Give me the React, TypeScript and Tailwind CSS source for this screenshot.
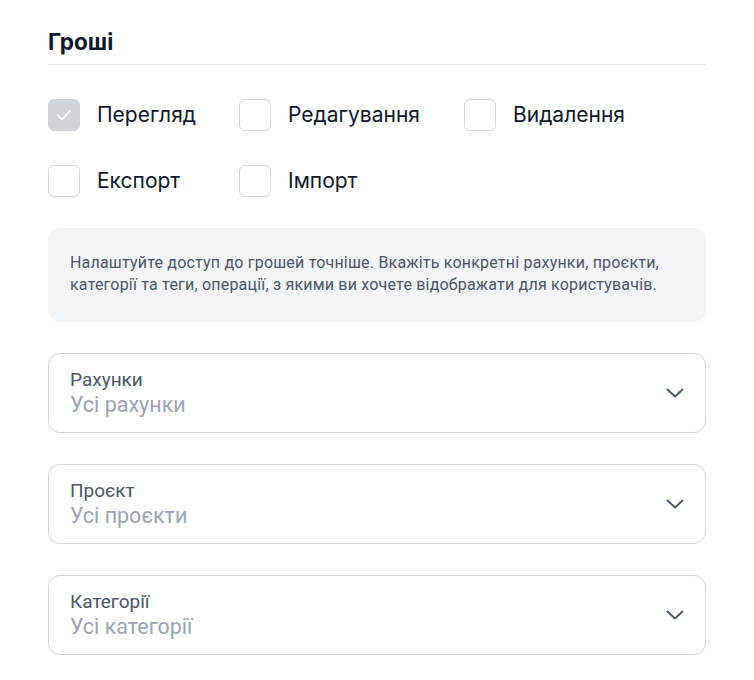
import { useState } from 'react'

type Perm = { key: string; label: string }

const row1: Perm[] = [
  { key: 'view', label: 'Перегляд' },
  { key: 'edit', label: 'Редагування' },
  { key: 'delete', label: 'Видалення' },
]

const row2: Perm[] = [
  { key: 'export', label: 'Експорт' },
  { key: 'import', label: 'Імпорт' },
]

const selects = [
  { label: 'Рахунки', value: 'Усі рахунки' },
  { label: 'Проєкт', value: 'Усі проєкти' },
  { label: 'Категорії', value: 'Усі категорії' },
]

function Checkbox({ checked, label, width }: { checked: boolean; label: string; width: string }) {
  return (
    <label className={`flex items-center gap-[17px] ${width}`}>
      <span
        className={`flex h-8 w-8 shrink-0 items-center justify-center rounded-md border ${
          checked ? 'border-[#d1d5db] bg-[#d1d5db]' : 'border-[#d1d5db] bg-white'
        }`}
      >
        {checked && (
          <svg width="20" height="20" viewBox="0 0 20 20" fill="none">
            <path d="M4 10.5l4 3.8L16 6" stroke="white" strokeWidth="1.7" strokeLinecap="round" strokeLinejoin="round" />
          </svg>
        )}
      </span>
      <span className="text-[21px] text-[#111827]">{label}</span>
    </label>
  )
}

function Chevron() {
  return (
    <svg width="24" height="24" viewBox="0 0 24 24" fill="none" className="shrink-0">
      <path d="M4.5 8.5l7.5 7 7.5-7" stroke="#4b5563" strokeWidth="1.9" strokeLinecap="round" strokeLinejoin="round" />
    </svg>
  )
}

export default function App() {
  const [perms] = useState<Record<string, boolean>>({ view: true })

  return (
    <div className="min-h-[680px] bg-white px-12 pt-[26px] font-['Inter',sans-serif]">
      <h2 className="text-[22.5px] font-bold leading-[31px] text-[#111827]">Гроші</h2>
      <div className="mt-[7px] h-px bg-[#e5e7eb]" />

      {/* permissions */}
      <div className="mt-[34px] flex flex-col gap-[34px]">
        <div className="flex items-center">
          {row1.map((p, i) => (
            <Checkbox key={p.key} checked={!!perms[p.key]} label={p.label} width={i === 0 ? 'w-[191px]' : i === 1 ? 'w-[225px]' : ''} />
          ))}
        </div>
        <div className="flex items-center">
          {row2.map((p, i) => (
            <Checkbox key={p.key} checked={!!perms[p.key]} label={p.label} width={i === 0 ? 'w-[191px]' : ''} />
          ))}
        </div>
      </div>

      <div className="mt-[31px] rounded-xl bg-[#f3f4f6] px-[22px] pt-6 pb-[26px] font-['Roboto',sans-serif] text-[16px] leading-[22px] tracking-[0.2px] text-[#4b5563]">
        Налаштуйте доступ до грошей точніше. Вкажіть конкретні рахунки, проєкти, категорії та теги, операції, з якими ви хочете відображати для користувачів.
      </div>

      <div className="mt-[31px] flex flex-col gap-[31px]">
        {selects.map((s) => (
          <button
            key={s.label}
            className="flex h-20 w-full items-center justify-between rounded-xl border border-[#d1d5db] bg-white pl-[21px] pr-[18px] text-left font-['Roboto',sans-serif]"
          >
            <span className="flex flex-col">
              <span className="text-[19px] leading-[24px] text-[#4b5563]">{s.label}</span>
              <span className="text-[21.5px] leading-[26px] text-[#9ca3af]">{s.value}</span>
            </span>
            <Chevron />
          </button>
        ))}
      </div>
    </div>
  )
}
